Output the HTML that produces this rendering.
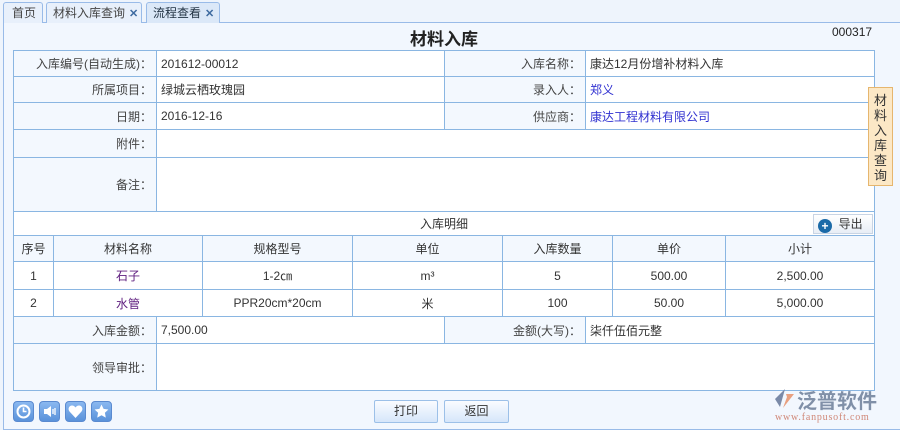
<!DOCTYPE html>
<html><head><meta charset="utf-8"><style>
*{margin:0;padding:0;box-sizing:border-box}
body{width:900px;height:430px;overflow:hidden;background:#eef4fc;font:12px "Liberation Sans","Noto Sans CJK SC",sans-serif;color:#333;position:relative}
.a{position:absolute}
.tab{position:absolute;top:2px;height:21px;border:1px solid #99bbe8;border-bottom:none;border-radius:3px 3px 0 0;background:#e8f0fb;line-height:20px;padding:0 0 0 7px;color:#444;font-size:12px;white-space:nowrap;overflow:hidden;z-index:2}
.x{font-weight:bold;color:#3d6aa0;margin-left:4px;font-size:11px}
.frame{position:absolute;left:3px;top:22px;width:897px;height:408px;border:1px solid #99bbe8;border-right:none;background:#f2f7fe}
table{position:absolute;border-collapse:collapse;left:13px;width:861px;table-layout:fixed}
td{border:1px solid #8ab6e2;height:26px;padding:0 4px;white-space:nowrap}
.l{background:#f3f8fe;text-align:right;color:#444}
.v{background:#fff}
.c td{text-align:center;background:#fff}
.h td{text-align:center;background:#f3f8fe}
.blue{color:#3030d0}
.pur{color:#602080}
.btn{position:absolute;top:400px;height:23px;border:1px solid #9cc0e8;border-radius:2px;background:linear-gradient(#fafcff,#d6e6fa);text-align:center;line-height:21px;font-size:12px}
.ic{position:absolute;top:401px;width:21px;height:21px;border-radius:4px;background:linear-gradient(#8ab8f0,#5a92da);border:1px solid #5a8ad0}
</style></head><body>
<div class="tab" style="left:3px;width:40px;padding-left:8px">首页</div>
<div class="tab" style="left:46px;width:96px;padding-left:6px">材料入库查询<span class="x">✕</span></div>
<div class="tab" style="left:146px;width:74px;background:#dbe8f8;color:#234;padding-left:6px">流程查看<span class="x">✕</span></div>
<div class="frame"></div>
<div class="a" style="left:0;width:888px;top:25px;text-align:center;font-size:17px;font-weight:bold;color:#222">材料入库</div>
<div class="a" style="left:832px;top:25px;font-size:12px;color:#222">000317</div>
<table style="top:50px">
<colgroup><col style="width:143px"><col style="width:288px"><col style="width:141px"><col style="width:289px"></colgroup>
<tr><td class="l">入库编号(自动生成)：</td><td class="v">201612-00012</td><td class="l">入库名称：</td><td class="v">康达12月份增补材料入库</td></tr>
<tr><td class="l">所属项目：</td><td class="v">绿城云栖玫瑰园</td><td class="l">录入人：</td><td class="v blue">郑义</td></tr>
<tr><td class="l" style="height:27px">日期：</td><td class="v">2016-12-16</td><td class="l">供应商：</td><td class="v blue">康达工程材料有限公司</td></tr>
<tr><td class="l" style="height:28px">附件：</td><td class="v" colspan="3"></td></tr>
<tr><td class="l" style="height:54px">备注：</td><td class="v" colspan="3"></td></tr>
<tr><td colspan="4" style="height:24px;text-align:center;background:#fff;position:relative">入库明细<span style="position:absolute;right:1px;top:2px;width:60px;height:20px;border:1px solid #c8d4e4;background:linear-gradient(#fff,#e8eef6);font-size:12px;line-height:18px;text-align:left;padding-left:4px"><span style="display:inline-block;width:14px;height:14px;border-radius:50%;background:#1a6aa8;color:#fff;text-align:center;line-height:14px;font-weight:bold;vertical-align:-2px">+</span>&nbsp;&nbsp;导出</span></td></tr>
</table>
<table style="top:235px">
<colgroup><col style="width:40px"><col style="width:149px"><col style="width:150px"><col style="width:150px"><col style="width:110px"><col style="width:113px"><col style="width:149px"></colgroup>
<tr class="h"><td>序号</td><td>材料名称</td><td>规格型号</td><td>单位</td><td>入库数量</td><td>单价</td><td>小计</td></tr>
<tr class="c"><td style="height:28px">1</td><td class="pur">石子</td><td>1-2㎝</td><td>m³</td><td>5</td><td>500.00</td><td>2,500.00</td></tr>
<tr class="c"><td style="height:27px">2</td><td class="pur">水管</td><td>PPR20cm*20cm</td><td>米</td><td>100</td><td>50.00</td><td>5,000.00</td></tr>
</table>
<table style="top:316px">
<colgroup><col style="width:143px"><col style="width:288px"><col style="width:141px"><col style="width:289px"></colgroup>
<tr><td class="l" style="height:27px">入库金额：</td><td class="v">7,500.00</td><td class="l">金额(大写)：</td><td class="v">柒仟伍佰元整</td></tr>
<tr><td class="l" style="height:47px">领导审批：</td><td class="v" colspan="3"></td></tr>
</table>
<div class="a" style="left:868px;top:87px;width:25px;height:99px;background:#fce8c6;border:1px solid #e6b66e;font-size:13px;line-height:15px;text-align:center;padding-top:5px;color:#333">材<br>料<br>入<br>库<br>查<br>询</div>
<div class="ic" style="left:13px"><svg width="19" height="19"><circle cx="9.5" cy="9.5" r="6" fill="none" stroke="#fff" stroke-width="2"/><path d="M9.5 5.5V9.5H12.5" stroke="#fff" stroke-width="1.6" fill="none"/></svg></div>
<div class="ic" style="left:39px"><svg width="19" height="19"><path d="M4 7h3l4-3v11l-4-3H4z" fill="#fff"/><path d="M13 7v5M15 6v7" stroke="#fff" stroke-width="1.3"/></svg></div>
<div class="ic" style="left:65px"><svg width="19" height="19"><path d="M9.5 16L3.5 9.5C1.5 7 3 3.5 6 3.5c1.7 0 2.8 1 3.5 2 .7-1 1.8-2 3.5-2 3 0 4.5 3.5 2.5 6z" fill="#fff"/></svg></div>
<div class="ic" style="left:91px"><svg width="19" height="19"><path d="M9.5 2.5l2.1 4.4 4.8.6-3.5 3.3.9 4.8-4.3-2.4-4.3 2.4.9-4.8L2.6 7.5l4.8-.6z" fill="#fff"/></svg></div>
<div class="btn" style="left:374px;width:64px">打印</div>
<div class="btn" style="left:444px;width:65px">返回</div>
<div class="a" style="left:772px;top:385px;width:128px;height:45px">
<svg class="a" style="left:0;top:3px" width="24" height="22"><path d="M13 1L3 11l5 8z" fill="#7a8aa8"/><path d="M14 6l8 0-11 14 4-11z" fill="#e8a080"/></svg>
<div class="a" style="left:25px;top:0;font-size:20px;color:#8090a8;font-weight:bold;letter-spacing:0;white-space:nowrap">泛普软件</div>
<div class="a" style="left:3px;top:27px;font:10px 'Liberation Serif',serif;color:#d08878;letter-spacing:.8px">www.fanpusoft.com</div>
</div>
</body></html>
